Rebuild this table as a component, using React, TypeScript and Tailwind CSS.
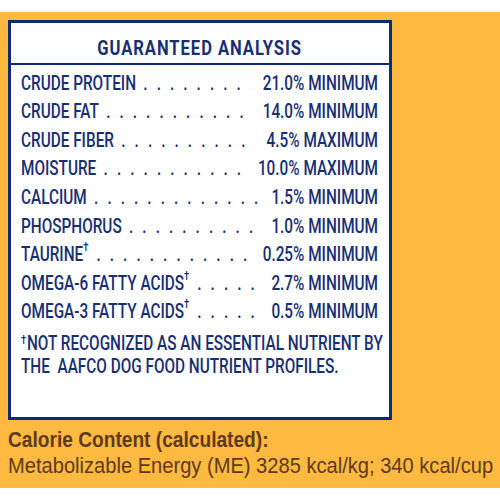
const rows: [string, boolean, string][] = [
  ["CRUDE PROTEIN", false, "21.0% MINIMUM"],
  ["CRUDE FAT", false, "14.0% MINIMUM"],
  ["CRUDE FIBER", false, "4.5% MAXIMUM"],
  ["MOISTURE", false, "10.0% MAXIMUM"],
  ["CALCIUM", false, "1.5% MINIMUM"],
  ["PHOSPHORUS", false, "1.0% MINIMUM"],
  ["TAURINE", true, "0.25% MINIMUM"],
  ["OMEGA-6 FATTY ACIDS", true, "2.7% MINIMUM"],
  ["OMEGA-3 FATTY ACIDS", true, "0.5% MINIMUM"],
];

const dots = ". . . . . . . . . . . . . . . . . . . . . . . . . . . . . . . . . . . . . . .";

function Dagger() {
  return <span className="text-[13px] leading-none align-top relative top-[1px] mr-[1px]">†</span>;
}

function Row({ label, dagger, value }: { label: string; dagger: boolean; value: string }) {
  return (
    <div className="flex items-center h-[28.6px] overflow-hidden">
      <span className="whitespace-nowrap">
        {label}
        {dagger && <Dagger />}
      </span>
      <span className="flex-1 overflow-hidden whitespace-nowrap tracking-[3.6px] pl-[10px] mr-4">{dots}</span>
      <span className="whitespace-nowrap">{value}</span>
    </div>
  );
}

export default function App() {
  return (
    <div className="w-[500px] h-[500px] bg-white pt-3 overflow-hidden">
      <div className="bg-[#fdb940] h-[476px] pt-2 px-2">
        <div className="w-[384px] h-[400px] border-[3px] border-[#0c2c78] bg-white text-[#182f74] font-['Roboto',sans-serif] overflow-hidden">
          <div className="h-[42px] border-b-2 border-[#0c2c78] flex items-center justify-center pt-[11px]">
            <span className="inline-block font-bold text-[21px] tracking-[1.2px] scale-x-[0.79] whitespace-nowrap">
              GUARANTEED ANALYSIS
            </span>
          </div>
          <div className="pl-[10px] pt-[4px]">
            <div className="w-[489px] origin-left scale-x-[0.73] text-[21px] font-medium">
              {rows.map((r) => (
                <Row key={r[0]} label={r[0]} dagger={r[1]} value={r[2]} />
              ))}
              <div className="leading-[23px] pt-[6px]">
                <div className="whitespace-nowrap"><Dagger />NOT RECOGNIZED AS AN ESSENTIAL NUTRIENT BY</div>
                <div className="whitespace-nowrap">THE&nbsp; AAFCO DOG FOOD NUTRIENT PROFILES.</div>
              </div>
            </div>
          </div>
        </div>
        <div className="text-[#5f391c] font-['Liberation_Sans',Arial,sans-serif] text-[22px] leading-[26px] pt-[7px]">
          <div className="w-[320px] origin-left scale-x-[0.87] font-bold whitespace-nowrap">Calorie Content (calculated):</div>
          <div className="w-[540px] origin-left scale-x-[0.914] whitespace-nowrap">Metabolizable Energy (ME) 3285 kcal/kg; 340 kcal/cup</div>
        </div>
      </div>
    </div>
  );
}
